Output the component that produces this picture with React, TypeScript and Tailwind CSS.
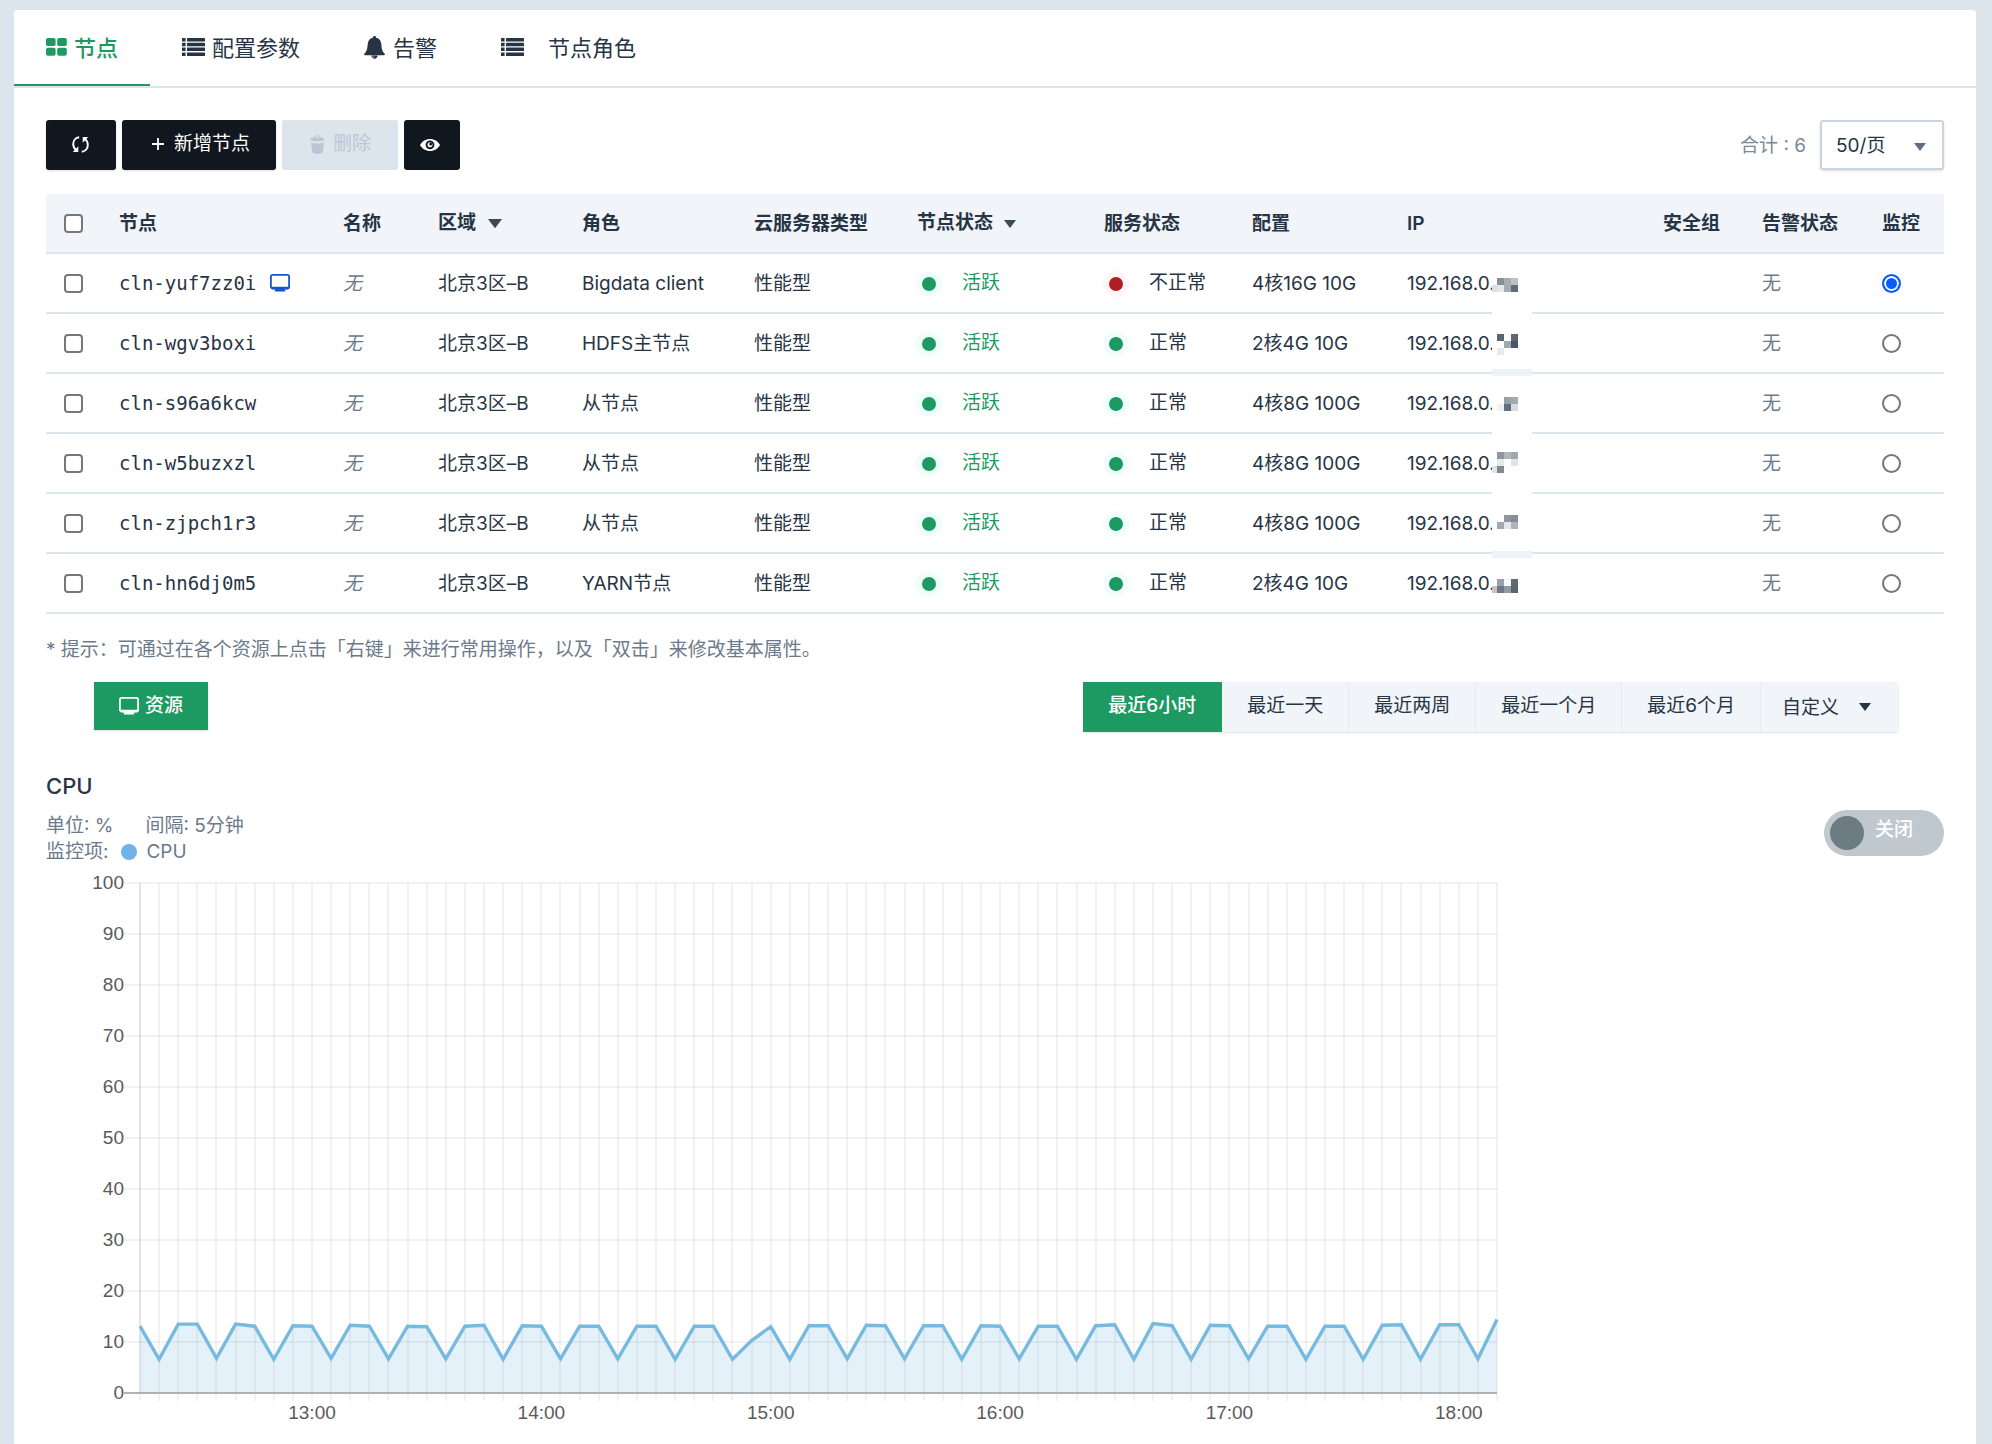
import { useState } from "react";
import clsx from "clsx";

type NodeRow = {
    id: string;
    role: string;
    config: string;
    healthy: boolean;
    console?: boolean;
    mask: [number, number, number, number, string][];
};

// mask: x, y, width, height, color of the blocks hiding the end of the IP
const nodes: NodeRow[] = [
    {
        id: "cln-yuf7zz0i", role: "Bigdata client", config: "4核16G 10G", healthy: false, console: true,
        mask: [
            [5, 24, 7, 7, "#868e98"], [12, 24, 7, 7, "#a7adb5"], [19, 24, 7, 7, "#bdc1c7"],
            [0, 31, 5, 7, "#dcdfe1"], [5, 31, 7, 7, "#e5e8e9"], [12, 31, 7, 7, "#a7adb5"], [19, 31, 7, 7, "#606b78"],
            [0, 57, 40, 4, "#ffffff"],
        ],
    },
    {
        id: "cln-wgv3boxi", role: "HDFS主节点", config: "2核4G 10G", healthy: true,
        mask: [
            [5, 20, 7, 7, "#5a6573"], [19, 20, 7, 7, "#5d6875"],
            [12, 27, 7, 7, "#a1a7af"], [19, 27, 7, 7, "#4d5764"],
            [5, 34, 7, 7, "#e6eae9"],
            [0, 55, 40, 7, "#edf2f6"],
        ],
    },
    {
        id: "cln-s96a6kcw", role: "从节点", config: "4核8G 100G", healthy: true,
        mask: [
            [12, 23, 7, 7, "#989fa8"], [19, 23, 7, 7, "#a5aab1"],
            [5, 30, 7, 7, "#f1f2f4"], [12, 30, 7, 7, "#636e7c"], [19, 30, 7, 7, "#d8dcdf"],
            [0, 57, 40, 4, "#ffffff"],
        ],
    },
    {
        id: "cln-w5buzxzl", role: "从节点", config: "4核8G 100G", healthy: true,
        mask: [
            [5, 18, 7, 7, "#8f969f"], [12, 18, 7, 7, "#b1b6ba"], [19, 18, 7, 7, "#a1a8ac"],
            [5, 25, 7, 7, "#e6e9e8"], [19, 25, 7, 7, "#dfe3e5"],
            [0, 32, 5, 7, "#e1e4e7"], [5, 32, 7, 7, "#808a93"],
            [0, 57, 40, 4, "#ffffff"],
        ],
    },
    {
        id: "cln-zjpch1r3", role: "从节点", config: "4核8G 100G", healthy: true,
        mask: [
            [12, 21, 7, 7, "#8f96a0"], [19, 21, 7, 7, "#858c96"],
            [5, 28, 7, 7, "#a1a8b2"], [12, 28, 7, 7, "#e3e7ea"], [19, 28, 7, 7, "#afb4bc"],
            [0, 57, 40, 7, "#edf2f6"],
        ],
    },
    {
        id: "cln-hn6dj0m5", role: "YARN节点", config: "2核4G 10G", healthy: true,
        mask: [
            [5, 25, 7, 7, "#9aa0a8"], [12, 25, 7, 7, "#f8fafb"], [19, 25, 7, 7, "#5f6a78"],
            [0, 32, 5, 7, "#c2c6ca"], [5, 32, 7, 7, "#707983"], [12, 32, 7, 7, "#929aa3"], [19, 32, 7, 7, "#5b6471"],
        ],
    },
];

const ranges = ["最近6小时", "最近一天", "最近两周", "最近一个月", "最近6个月"];

// one sample every 5 minutes, from 12:15
const cpu = [
    13.1, 6.6, 13.5, 13.5, 6.8, 13.5, 13.1, 6.6, 13.2, 13.1, 6.8, 13.3,
    13.1, 6.7, 13.1, 13, 6.7, 13.1, 13.3, 6.6, 13.2, 13.1, 6.7, 13.1,
    13.1, 6.7, 13.1, 13.1, 6.6, 13.1, 13.1, 6.6, 10.3, 13, 6.6, 13.2,
    13.2, 6.7, 13.3, 13.2, 6.7, 13.2, 13.2, 6.6, 13.2, 13.1, 6.7, 13.1,
    13.1, 6.6, 13.2, 13.4, 6.6, 13.6, 13.2, 6.6, 13.3, 13.2, 6.7, 13.1,
    13.1, 6.6, 13.1, 13.1, 6.6, 13.3, 13.4, 6.6, 13.4, 13.4, 6.7, 14.4,
];

const GridIcon = () => (
    <svg width="21" height="18" viewBox="0 0 21 18" fill="currentColor" aria-hidden="true">
        <rect width="9.6" height="8" rx="1.8" />
        <rect x="11.2" width="9.6" height="8" rx="1.8" />
        <rect y="9.8" width="9.6" height="8" rx="1.8" />
        <rect x="11.2" y="9.8" width="9.6" height="8" rx="1.8" />
    </svg>
);

const ListIcon = () => (
    <svg width="23" height="18" viewBox="0 0 23 18" fill="currentColor" aria-hidden="true">
        {[0, 4.8, 9.6, 14.4].map((y) => (
            <g key={y}>
                <rect y={y} width="3.6" height="3.5" rx="0.5" />
                <rect x="5" y={y} width="18" height="3.5" rx="0.4" />
            </g>
        ))}
    </svg>
);

const BellIcon = () => (
    <svg width="21" height="23" viewBox="0 0 21 23" fill="currentColor" aria-hidden="true">
        <path d="M10.5 0c1 0 1.6.7 1.6 1.7 3.4.7 5 3.2 5.2 6.6.3 4.5.9 7.3 3.2 9.3.7.7.4 1.7-.6 1.7H1.1c-1 0-1.3-1-.6-1.7 2.3-2 2.9-4.8 3.2-9.3.2-3.4 1.8-5.9 5.2-6.6C8.9.7 9.5 0 10.5 0z" />
        <path d="M7.4 19.5h6.2c0 1.9-1.3 3.3-3.1 3.3s-3.1-1.4-3.1-3.3z" />
        <path d="M8.8 20.2c.1.9.7 1.4 1.5 1.5" fill="none" stroke="#fff" strokeWidth="0.6" />
    </svg>
);

const RefreshIcon = () => (
    <svg width="17" height="17" viewBox="0 0 17 17" fill="none" stroke="currentColor" strokeWidth="1.9" aria-hidden="true">
        <path d="M7.2 1.2C3.4 1.6 1.2 4.7 1.2 8c0 2.7 1.2 4.9 3.2 6.2" />
        <path d="M9.8 15.8c3.8-.4 6-3.5 6-6.8 0-2.7-1.2-4.9-3.2-6.2" />
        <path d="M0.8 15.9h5.5v-5.6zM16.2 1.1h-5.5v5.6z" fill="currentColor" stroke="none" />
    </svg>
);

const TrashIcon = () => (
    <svg width="15" height="19" viewBox="0 0 15 19" fill="currentColor" aria-hidden="true">
        <path d="M0 4.6C.5 3.4 2.3 2.5 4.3 2.2 5.3.8 6.2.2 7.5.2s2.2.6 3.2 2c2 .3 3.8 1.2 4.3 2.4-.6 1-3.6 1.7-7.5 1.7S.6 5.600 0 4.6z" />
        <path d="M5.6 2.9c.6-.9 1.2-1.2 1.9-1.2s1.3.3 1.9 1.2" fill="none" stroke="#dde5ec" strokeWidth="1.1" />
        <path d="M1.1 7.4c1.7.7 3.9 1 6.4 1s4.7-.3 6.4-1l-1 9.3c-.2 1.3-2.4 2.2-5.4 2.2s-5.2-.9-5.4-2.2z" />
    </svg>
);

const EyeIcon = () => (
    <svg width="20" height="12" viewBox="0 0 20 12" aria-hidden="true">
        <path d="M0 6C2 2.3 5.7 0 10 0s8 2.3 10 6c-2 3.7-5.7 6-10 6S2 9.7 0 6z" fill="currentColor" />
        <circle cx="10" cy="5.8" r="4.4" fill="#10171f" />
        <circle cx="10" cy="5.8" r="2.5" fill="currentColor" />
        <circle cx="10.7" cy="5" r="1.5" fill="#10171f" />
    </svg>
);

const MonitorIcon = () => (
    <svg width="20" height="18" viewBox="0 0 20 18" aria-hidden="true">
        <rect x="0.9" y="0.9" width="18.2" height="13.6" rx="1.8" fill="none" stroke="currentColor" strokeWidth="1.8" />
        <path d="M1 12.7h18v1c0 .9-.7 1.5-1.5 1.5h-3l1 2.2H4.5l1-2.2h-3C1.7 15.2 1 14.6 1 13.7z" fill="currentColor" />
    </svg>
);

const Caret = ({ size = "w-3" }: { size?: string }) => (
    <svg className={clsx(size, "inline-block")} viewBox="0 0 12 8" fill="currentColor" aria-hidden="true">
        <path d="M0 0h12L6 8z" />
    </svg>
);

const Checkbox = ({ label }: { label: string }) => (
    <input
        type="checkbox"
        aria-label={label}
        className="block size-[19px] appearance-none rounded-[4px] border-2 border-[#777] bg-white checked:border-[#0b5cff] checked:bg-[#0b5cff]"
    />
);

const tabs = [
    { label: "节点", icon: <GridIcon />, gap: "gap-[7px]" },
    { label: "配置参数", icon: <ListIcon />, gap: "gap-[7px]" },
    { label: "告警", icon: <BellIcon />, gap: "gap-2" },
    { label: "节点角色", icon: <ListIcon />, gap: "gap-6" },
];

const Status = ({ ok, children, className }: { ok: boolean; children: string; className?: string }) => (
    <div className="flex items-center gap-[26px] pl-[5px]">
        <span
            className={clsx(
                "size-[14px] rounded-full ring-[6px]",
                ok ? "bg-[#1d9a62] ring-[#effefa]" : "bg-[#ad1f24] ring-[#fff4f6]"
            )}
        />
        <span className={clsx("pb-[3px]", className)}>{children}</span>
    </div>
);

const NodeTable = () => {
    const [monitored, setMonitored] = useState(nodes[0].id);

    return (
        <table className="w-full table-fixed border-separate border-spacing-0 text-left text-[19px] leading-7 text-[#273444]">
            <colgroup>
                <col className="w-[73px]" />
                <col className="w-[224px]" />
                <col className="w-[95px]" />
                <col className="w-[144px]" />
                <col className="w-[172px]" />
                <col className="w-[163px]" />
                <col className="w-[187px]" />
                <col className="w-[148px]" />
                <col className="w-[155px]" />
                <col />
                <col className="w-[99px]" />
                <col className="w-[120px]" />
                <col className="w-[62px]" />
            </colgroup>
            <thead className="bg-[#f1f4f9] [&_th]:h-[60px] [&_th]:border-b-2 [&_th]:border-[#dce5ec] [&_th]:font-semibold [&_th]:whitespace-nowrap [&_th:nth-child(n+2)]:pt-[2px]">
                <tr>
                    <th className="pl-[18px]">
                        <Checkbox label="全选" />
                    </th>
                    <th>节点</th>
                    <th>名称</th>
                    <th>
                        <div className="flex items-center gap-3 text-[#3b4a59]">
                            <span className="pb-[3px] text-[#273444]">区域</span>
                            <Caret size="w-[14px]" />
                        </div>
                    </th>
                    <th>角色</th>
                    <th>云服务器类型</th>
                    <th>
                        <div className="flex items-center gap-[11px] text-[#3b4a59]">
                            <span className="pb-[3px] text-[#273444]">节点状态</span>
                            <Caret />
                        </div>
                    </th>
                    <th>服务状态</th>
                    <th>配置</th>
                    <th>IP</th>
                    <th>安全组</th>
                    <th>告警状态</th>
                    <th>监控</th>
                </tr>
            </thead>
            <tbody className="[&_td]:h-[60px] [&_td]:border-b-2 [&_td]:border-[#dce5ec] [&_td]:whitespace-nowrap [&_td:nth-child(n+3):not(:last-child)]:pt-[2px]">
                {nodes.map((node) => (
                    <tr key={node.id}>
                        <td className="pl-[18px]">
                            <Checkbox label={node.id} />
                        </td>
                        <td>
                            <div className="flex items-center gap-[14px] font-['DejaVu_Sans_Mono',monospace]">
                                {node.id}
                                {node.console && (
                                    <button type="button" aria-label="控制台" className="text-[#1556d8]">
                                        <MonitorIcon />
                                    </button>
                                )}
                            </div>
                        </td>
                        <td className="text-[#6b7a8a] italic">无</td>
                        <td>北京3区–B</td>
                        <td>{node.role}</td>
                        <td>性能型</td>
                        <td>
                            <Status ok className="text-[#1d9a62]">活跃</Status>
                        </td>
                        <td>
                            <Status ok={node.healthy}>{node.healthy ? "正常" : "不正常"}</Status>
                        </td>
                        <td>{node.config}</td>
                        <td className="relative">
                            192.168.0.
                            <svg className="absolute top-0 left-[85px]" width="40" height="64" aria-hidden="true">
                                <rect y="18" width="40" height="24" fill="#fff" />
                                {node.mask.map(([x, y, w, h, fill]) => (
                                    <rect key={`${x}-${y}`} x={x} y={y} width={w} height={h} fill={fill} />
                                ))}
                            </svg>
                        </td>
                        <td></td>
                        <td className="text-[#6b7a8a]">无</td>
                        <td>
                            <input
                                type="radio"
                                name="monitor"
                                aria-label={`监控 ${node.id}`}
                                className="block size-[19px] appearance-none rounded-full border-2 border-[#777] bg-white checked:border-[#0b5cff] checked:bg-[#0b5cff] checked:shadow-[inset_0_0_0_2px_#fff]"
                                checked={monitored === node.id}
                                onChange={() => setMonitored(node.id)}
                            />
                        </td>
                    </tr>
                ))}
            </tbody>
        </table>
    );
};

const CpuChart = () => {
    const left = 94;
    const top = 12;
    const width = 1357;
    const height = 510;
    const bottom = top + height;
    const px = (i: number) => left + (i * width) / (cpu.length - 1);
    const py = (v: number) => bottom - (v * height) / 100;
    const line = cpu.map((v, i) => `${px(i).toFixed(1)},${py(v).toFixed(1)}`).join(" ");

    return (
        <svg
            className="mt-[6px] block w-[1460px] max-w-full font-['Liberation_Sans',Arial,sans-serif] text-[19px]"
            viewBox="0 0 1460 558"
            role="img"
            aria-label="CPU"
        >
            <g stroke="#000" strokeOpacity="0.05" strokeWidth="2">
                {cpu.map((_, i) => (
                    <line key={i} x1={Math.round(px(i))} x2={Math.round(px(i))} y1={top} y2={bottom + 8} />
                ))}
                {[10, 20, 30, 40, 50, 60, 70, 80, 90, 100].map((v) => (
                    <line key={v} x1={left - 16} x2={left + width} y1={py(v)} y2={py(v)} />
                ))}
            </g>
            <line x1={left} x2={left} y1={top} y2={bottom} stroke="#000" strokeOpacity="0.05" strokeWidth="2" />
            <line x1={left - 16} x2={left + width} y1={bottom} y2={bottom} stroke="#b2b2b2" strokeWidth="2" />
            <polygon points={`${left},${bottom} ${line} ${left + width},${bottom}`} fill="#76bbdf" fillOpacity="0.2" />
            <polyline points={line} fill="none" stroke="#76bbdf" strokeWidth="3.4" />
            <g fill="#5a5a5a" textAnchor="end">
                {[0, 10, 20, 30, 40, 50, 60, 70, 80, 90, 100].map((v) => (
                    <text key={v} x={left - 16} y={py(v) + 6}>{v}</text>
                ))}
            </g>
            <g fill="#5a5a5a" textAnchor="middle">
                {["13:00", "14:00", "15:00", "16:00", "17:00", "18:00"].map((time, i) => (
                    <text key={time} x={px(9 + i * 12)} y={bottom + 26}>{time}</text>
                ))}
            </g>
        </svg>
    );
};

const App = () => {
    const [tab, setTab] = useState("节点");
    const [range, setRange] = useState("最近6小时");
    const [live, setLive] = useState(false);

    return (
        <div className="flex min-h-screen bg-[#dde5ec] pt-[10px] pr-4 pl-[14px] font-[Inter,'Noto_Sans_CJK_SC',sans-serif] text-[19px] leading-7 text-[#273444] antialiased">
            <main className="min-w-0 flex-1 rounded-t bg-white">
                {/* TABS */}
                <nav className="flex border-b-2 border-[#dde5ec] text-[22px]">
                    {tabs.map((item) => (
                        <button
                            key={item.label}
                            type="button"
                            onClick={() => setTab(item.label)}
                            className={clsx(
                                "flex h-[76px] items-center border-b-2 px-8",
                                item.gap,
                                tab === item.label ? "border-[#1d9a62] font-medium text-[#1d9a62]" : "border-transparent"
                            )}
                        >
                            {item.icon}
                            <span className="pt-[2px]">{item.label}</span>
                        </button>
                    ))}
                </nav>

                <div className="px-8 pt-8">
                    {/* TOOLBAR */}
                    <div className="flex items-center justify-between">
                        <div className="flex gap-[6px]">
                            <button type="button" aria-label="刷新" className="flex h-[50px] w-[70px] items-center justify-center rounded-[3px] bg-[#10171f] pr-[2px] pb-[2px] text-white shadow">
                                <RefreshIcon />
                            </button>
                            <button type="button" className="flex h-[50px] items-center gap-[10px] rounded-[3px] bg-[#10171f] pr-[26px] pb-[2px] pl-[30px] text-white shadow">
                                <svg width="12" height="12" viewBox="0 0 12 12" stroke="currentColor" strokeWidth="1.8" aria-hidden="true">
                                    <path d="M6 0v12M0 6h12" />
                                </svg>
                                新增节点
                            </button>
                            <button type="button" disabled className="flex h-[50px] items-center gap-2 rounded-[3px] bg-[#dde5ec] pr-[27px] pb-[2px] pl-7 text-[#b9c8d5]">
                                <TrashIcon />
                                删除
                            </button>
                            <button type="button" aria-label="显示" className="flex h-[50px] w-14 items-center justify-center rounded-[3px] bg-[#10171f] pr-1 text-white">
                                <EyeIcon />
                            </button>
                        </div>
                        <div className="flex items-center gap-[14px]">
                            <span className="pt-[2px] text-[#7b8896]">合计 : 6</span>
                            <div className="relative">
                                <select aria-label="每页数量" className="h-[50px] w-[124px] appearance-none rounded-[3px] border-2 border-[#c9d5e0] bg-white pt-[2px] pl-[14px] shadow-sm">
                                    <option>50/页</option>
                                    <option>100/页</option>
                                </select>
                                <span className="pointer-events-none absolute top-3 right-[18px] text-[#5f7080]">
                                    <Caret />
                                </span>
                            </div>
                        </div>
                    </div>

                    <div className="mt-6">
                        <NodeTable />
                    </div>

                    <p className="mt-[22px] text-[#6b7a8a]">
                        * 提示：可通过在各个资源上点击「右键」来进行常用操作，以及「双击」来修改基本属性。
                    </p>

                    {/* RESOURCE + RANGE */}
                    <div className="mt-[18px] flex items-start justify-between pr-[46px] pl-12">
                        <button type="button" className="flex h-12 items-center gap-[6px] bg-[#1d9a62] px-[25px] font-medium text-white shadow">
                            <MonitorIcon />
                            资源
                        </button>
                        <div className="flex h-[50px] rounded-[3px] bg-[#f1f4f9] shadow">
                            {ranges.map((item) => (
                                <button
                                    key={item}
                                    type="button"
                                    onClick={() => setRange(item)}
                                    className={clsx(
                                        "border-r px-[25px] pb-[2px]",
                                        range === item
                                            ? "border-[#1d9a62] bg-[#1d9a62] font-medium text-white"
                                            : "border-[#e6ebf2]"
                                    )}
                                >
                                    {item}
                                </button>
                            ))}
                            <button type="button" className="flex items-center gap-5 pr-[27px] pl-[21px]">
                                <span className="pt-[2px]">自定义</span>
                                <Caret />
                            </button>
                        </div>
                    </div>

                    {/* CPU */}
                    <section className="mt-10">
                        <h2 className="text-[22px] leading-7 font-medium">CPU</h2>
                        <div className="mt-[10px] flex items-start justify-between">
                            <div className="pt-[3px] leading-[26px] text-[#6b7a8a]">
                                <div className="flex gap-8">
                                    <span>单位: %</span>
                                    <span>间隔: 5分钟</span>
                                </div>
                                <div className="flex items-center">
                                    <span>监控项:</span>
                                    <span className="mr-[9px] ml-[13px] size-4 rounded-full bg-[#6fb3ea]" />
                                    <span>CPU</span>
                                </div>
                            </div>
                            <button
                                type="button"
                                role="switch"
                                aria-checked={live}
                                onClick={() => setLive(!live)}
                                className="flex h-[46px] w-[120px] items-center gap-[11px] rounded-full bg-[#bfc8cf] px-[6px] font-medium text-white"
                            >
                                <span className="size-[34px] rounded-full bg-[#6d7b83]" />
                                <span className="pb-[6px]">{live ? "开启" : "关闭"}</span>
                            </button>
                        </div>
                        <CpuChart />
                    </section>
                </div>
            </main>
        </div>
    );
};

export default App;
